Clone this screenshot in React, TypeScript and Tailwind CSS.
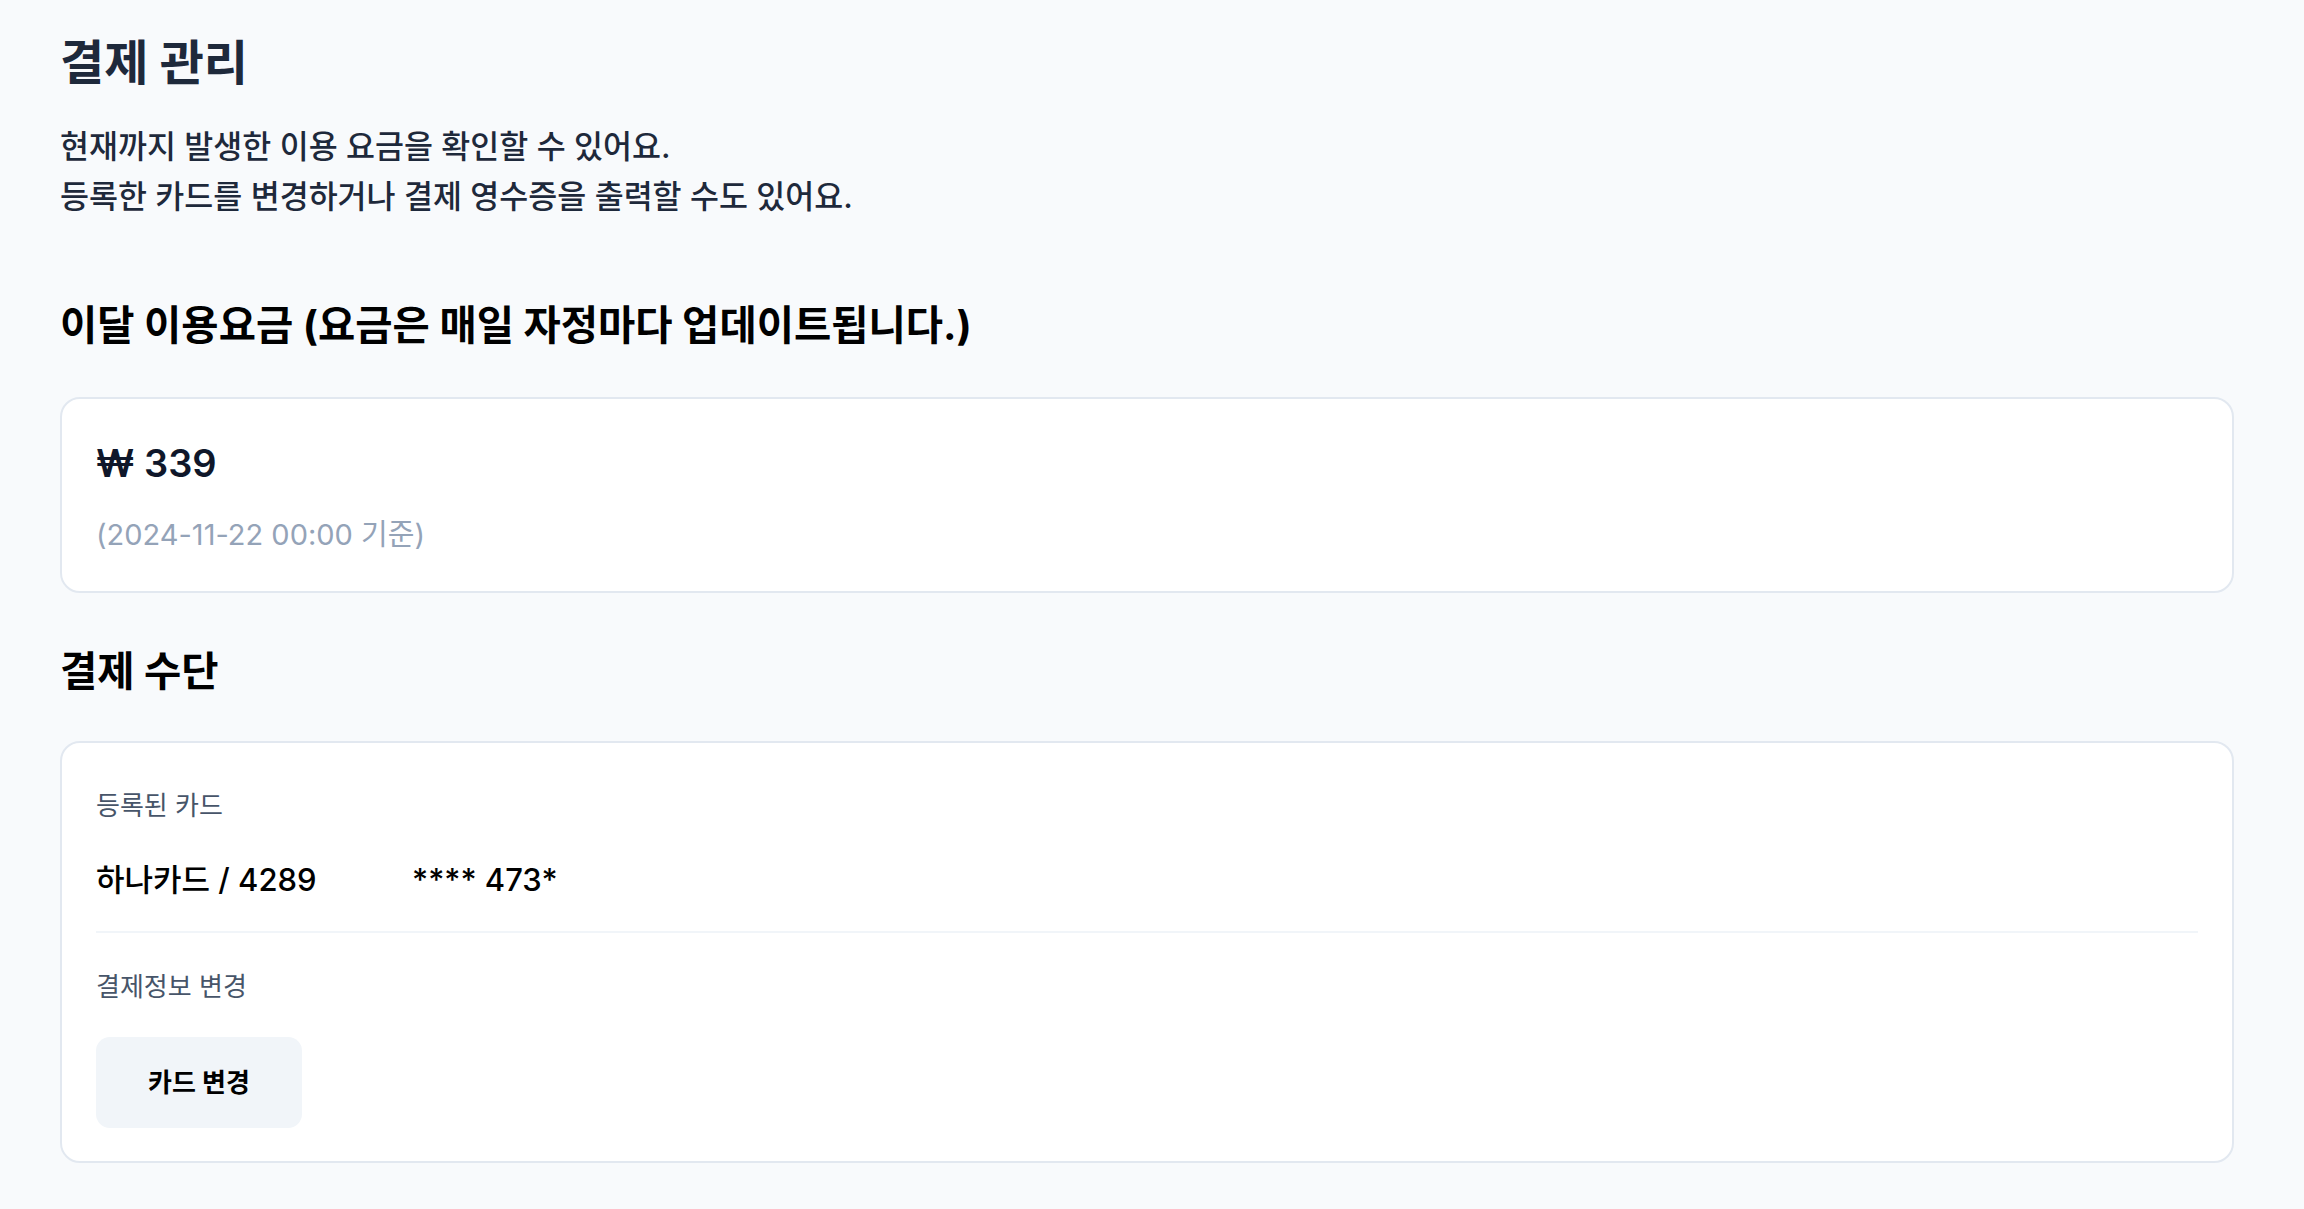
import React from "react";

export default function App() {
  return (
    <div
      className="min-h-[1209px] w-full bg-[#f8fafc] pl-[60px] pr-[70px] pt-[35px] pb-[40px]"
      style={{ fontFamily: "Inter, 'Noto Sans CJK KR', sans-serif" }}
    >
      <h1 className="text-[48px] leading-[56px] font-bold text-[#1e293b]">결제 관리</h1>
      <div className="mt-[31px] text-[31.5px] leading-[50px] font-medium text-[#1e293b]">
        <p>현재까지 발생한 이용 요금을 확인할 수 있어요.</p>
        <p>등록한 카드를 변경하거나 결제 영수증을 출력할 수도 있어요.</p>
      </div>

      <h2 className="mt-[79px] text-[40.5px] leading-[50px] font-bold text-black">
        이달 이용요금 (요금은 매일 자정마다 업데이트됩니다.)
      </h2>

      <section className="mt-[46px] rounded-[20px] border-2 border-[#e2e8f0] bg-white px-[34px] pt-[40px] pb-[36px]">
        <div className="text-[38px] leading-[48px] font-semibold text-[#0f172a]">₩ 339</div>
        <div className="mt-[28px] text-[29px] leading-[40px] text-[#94a3b8]">(2024-11-22 00:00 기준)</div>
      </section>

      <h2 className="mt-[54px] text-[40.5px] leading-[50px] font-bold text-black">결제 수단</h2>

      <section className="mt-[44px] rounded-[20px] border-2 border-[#e2e8f0] bg-white px-[34px] pt-[45px] pb-[33px]">
        <div className="text-[26px] leading-[36px] text-[#475569]">등록된 카드</div>
        <div className="mt-[34px] flex items-center text-[31px] leading-[44px] font-medium text-black">
          <span className="w-[316px]">하나카드 / 4289</span>
          <span>**** 473*</span>
        </div>
        <div className="mt-[29px] h-[2px] bg-[#f1f5f9]" />
        <div className="mt-[36px] text-[26px] leading-[36px] text-[#475569]">결제정보 변경</div>
        <button
          type="button"
          className="mt-[32px] flex h-[91px] w-[206px] items-center justify-center rounded-[14px] bg-[#f1f5f9] text-[26px] font-bold text-black"
        >
          카드 변경
        </button>
      </section>
    </div>
  );
}
